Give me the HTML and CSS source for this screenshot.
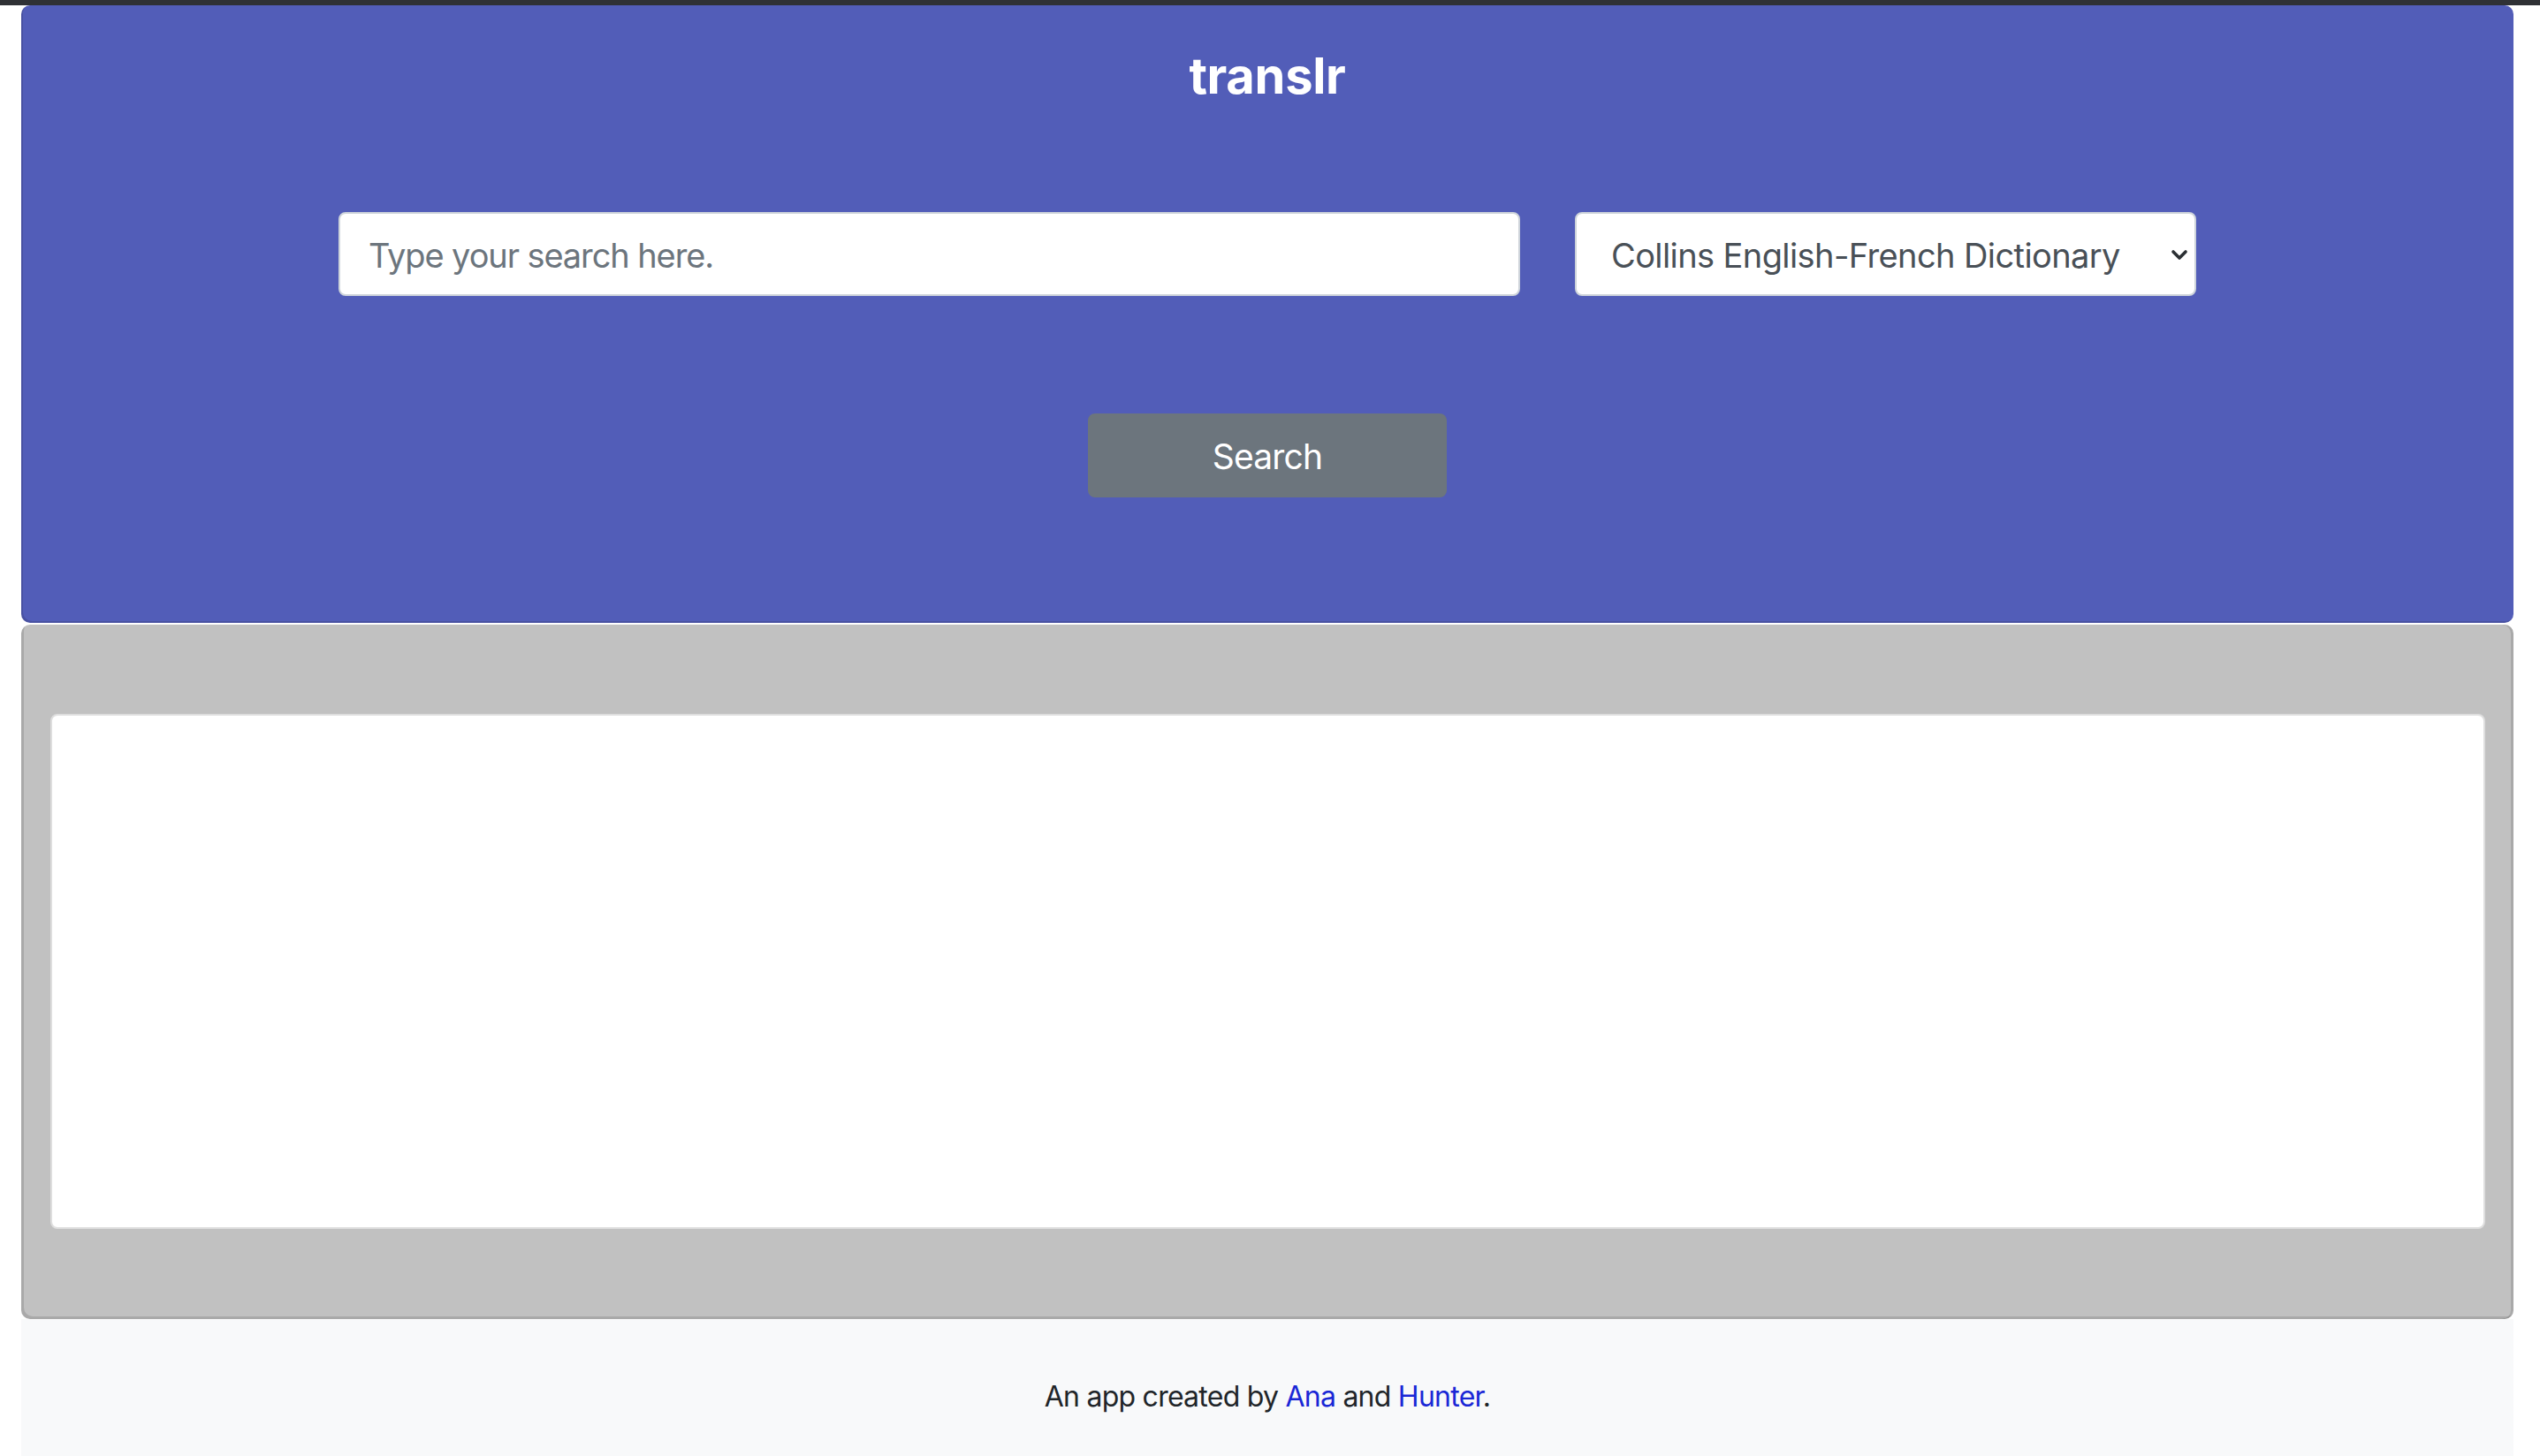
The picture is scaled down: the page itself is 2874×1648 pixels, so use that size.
FILE: index.html
```html
<!DOCTYPE html>
<html lang="en">
<head>
<meta charset="utf-8">
<title>translr</title>
<link rel="stylesheet" href="styles.css">
</head>
<body>
<div class="topbar"></div>
<div class="page">
  <header class="hero">
    <h1 class="title">translr</h1>
    <form class="search-row" onsubmit="return false">
      <input class="search-input" type="text" placeholder="Type your search here.">
      <div class="select-wrap">
        <select class="dict-select">
          <option>Collins English-French Dictionary</option>
        </select>
        <svg class="chev" width="20" height="14" viewBox="0 0 20 14" aria-hidden="true"><path d="M3 3 L10 10 L17 3" fill="none" stroke="#2b2f33" stroke-width="3.6" stroke-linecap="round" stroke-linejoin="round"/></svg>
      </div>
    </form>
    <div class="btn-row"><button class="search-btn" type="button">Search</button></div>
  </header>
  <section class="results">
    <div class="results-box"></div>
  </section>
  <footer class="footer">
    <p>An app created by <a href="#">Ana</a> and <a href="#">Hunter</a>.</p>
  </footer>
</div>
</body>
</html>
```
FILE: styles.css
```css
* { box-sizing: border-box; }
html, body { margin: 0; padding: 0; background: #ffffff; }
body { font-family: Inter, "Noto Sans", "Liberation Sans", sans-serif; }

.topbar { height: 6px; background: #2f3135; }

.page { padding: 0 30px 0 24px; }

.hero {
  background: #525db8;
  border-radius: 10px;
  box-shadow: inset 2px -2px 0 rgba(0,0,0,0.12);
  padding: 46px 0 142px;
  display: flex;
  flex-direction: column;
  align-items: center;
}
.title {
  margin: 0;
  font-size: 56px;
  line-height: 68px;
  font-weight: 700;
  color: #ffffff;
  letter-spacing: -0.3px;
}
.search-row {
  margin: 120px 0 0;
  display: flex;
  gap: 62px;
}
.search-input, .dict-select {
  height: 95px;
  border: 2px solid #ced4da;
  border-radius: 8px;
  background: #ffffff;
  font-family: inherit;
  font-size: 38px;
  outline: none;
  padding-top: 3px;
}
.search-input {
  width: 1337px;
  padding-left: 32px;
  padding-right: 32px;
  color: #495057;
  letter-spacing: -1.1px;
}
.search-input::placeholder { color: #6c757d; }
.select-wrap { position: relative; }
.dict-select {
  width: 703px;
  padding-left: 39px;
  padding-right: 40px;
  color: #495057;
  appearance: none;
  -webkit-appearance: none;
  letter-spacing: -0.6px;
}
.chev { position: absolute; right: 9px; top: 42px; }

.btn-row { margin-top: 133px; }
.search-btn {
  width: 406px;
  height: 95px;
  border: none;
  border-radius: 8px;
  background: #6c757d;
  color: #ffffff;
  font-family: inherit;
  font-size: 39px;
  letter-spacing: -0.8px;
  padding-top: 2px;
}

.results {
  margin-top: 2px;
  background: #c1c1c1;
  border-radius: 10px;
  box-shadow: inset 3px -3px 0 rgba(0,0,0,0.12), inset -3px 0 0 rgba(0,0,0,0.12);
  padding: 101px 32px 102px 33px;
}
.results-box {
  height: 583px;
  background: #ffffff;
  border: 2px solid #dedede;
  border-radius: 8px;
}

.footer {
  background: #f8f9fa;
  padding: 64px 0 70px;
  text-align: center;
}
.footer p {
  margin: 0;
  font-size: 32px;
  line-height: 48px;
  color: #212529;
  letter-spacing: -0.75px;
}
.footer a { color: #1a27d6; text-decoration: none; }
```
